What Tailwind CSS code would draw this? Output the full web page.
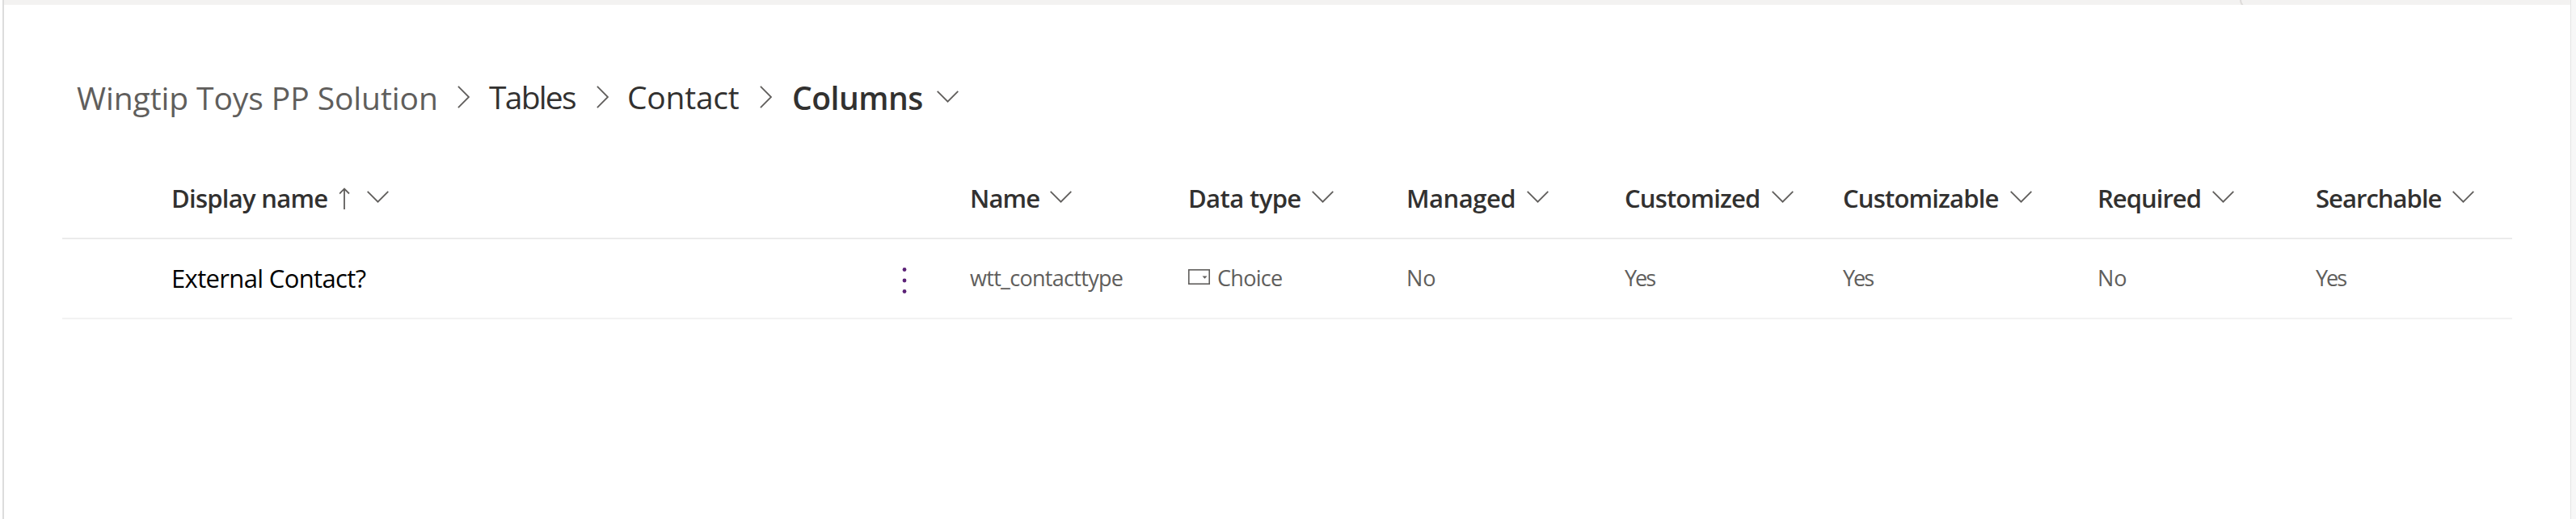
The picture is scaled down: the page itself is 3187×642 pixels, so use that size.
<!DOCTYPE html>
<html lang="en">
<head>
<meta charset="utf-8">
<title>Contact columns</title>
<script src="https://cdn.jsdelivr.net/npm/@tailwindcss/browser@4"></script>
</head>
<body class="bg-white font-['Open_Sans','Noto_Sans',sans-serif]">
<svg class="hidden">
  <symbol id="down" viewBox="0 0 27 15"><path d="M.7 .9 13.5 13.7 26.3 .9" fill="none" stroke="#605e5c" stroke-width="1.8"/></symbol>
  <symbol id="right" viewBox="0 0 15 28"><path d="M.9 .9 14 14 .9 27.1" fill="none" stroke="#605e5c" stroke-width="1.8"/></symbol>
</svg>
<div class="flex h-[642px] w-[3187px] overflow-hidden pl-[3px]">
  <div class="w-[2px] shrink-0 bg-[#dddddd]"></div>
  <main class="w-[3175px] shrink-0">
    <div class="flex h-[6px] bg-[#f3f2f1] pl-[2766px]">
      <svg class="h-[6px] w-[6px]" viewBox="0 0 6 6"><path d="M1 0Q1 4 4 7" fill="none" stroke="#dddbd9" stroke-width="2"/></svg>
    </div>
    <nav class="flex h-[188px] whitespace-nowrap pt-[88px] pl-[90px] text-[39px] leading-[54px] text-[#323130]">
      <span class="w-[471px] tracking-[-0.08px] text-[#605e5c]">Wingtip Toys PP Solution</span>
      <svg class="mt-[12px] h-[28px] w-[15px]"><use href="#right"/></svg>
      <span class="-mt-px w-[157px] pl-[24px] tracking-[-1.76px]">Tables</span>
      <svg class="mt-[12px] h-[28px] w-[15px]"><use href="#right"/></svg>
      <span class="-mt-px w-[187px] pl-[23px] tracking-[-0.23px]">Contact</span>
      <svg class="mt-[12px] h-[28px] w-[15px]"><use href="#right"/></svg>
      <span class="w-[204px] pl-[25px] font-semibold tracking-[-0.5px]">Columns</span>
      <svg class="mt-[18px] h-[15px] w-[27px]"><use href="#down"/></svg>
    </nav>
    <section class="ml-[72px] w-[3031px] whitespace-nowrap">
      <div class="grid h-[102px] grid-cols-[1123px_270px_270px_270px_270px_315px_270px_243px] border-b-2 border-[#ebebeb] pt-[29px] text-[31px] leading-[44px] font-semibold text-[#323130]">
        <div class="flex pl-[135px]">
          <span class="w-[208px] tracking-[-0.72px]">Display name</span>
          <svg class="mt-[9px] h-[28px] w-[34px]" viewBox="0 0 34 28"><path d="M6 27V1.5M0 7.5 6 1.5l6 6" fill="none" stroke="#605e5c" stroke-width="1.8"/></svg>
          <svg class="mt-[13px] h-[15px] w-[27px]"><use href="#down"/></svg>
        </div>
        <div class="flex"><span class="w-[99px] tracking-[-0.9px]">Name</span><svg class="mt-[13px] h-[15px] w-[27px]"><use href="#down"/></svg></div>
        <div class="flex"><span class="w-[153px] tracking-[-0.6px]">Data type</span><svg class="mt-[13px] h-[15px] w-[27px]"><use href="#down"/></svg></div>
        <div class="flex"><span class="w-[149px] tracking-[-0.5px]">Managed</span><svg class="mt-[13px] h-[15px] w-[27px]"><use href="#down"/></svg></div>
        <div class="flex"><span class="w-[182px] tracking-[-0.83px]">Customized</span><svg class="mt-[13px] h-[15px] w-[27px]"><use href="#down"/></svg></div>
        <div class="flex"><span class="w-[207px] tracking-[-0.82px]">Customizable</span><svg class="mt-[13px] h-[15px] w-[27px]"><use href="#down"/></svg></div>
        <div class="flex"><span class="w-[142px] tracking-[-0.97px]">Required</span><svg class="mt-[13px] h-[15px] w-[27px]"><use href="#down"/></svg></div>
        <div class="flex"><span class="w-[169px] tracking-[-0.97px]">Searchable</span><svg class="mt-[13px] h-[15px] w-[27px]"><use href="#down"/></svg></div>
      </div>
      <div class="grid h-[99px] grid-cols-[1123px_270px_270px_270px_270px_315px_270px_243px] border-b-2 border-[#f2f2f2] pt-[26px] text-[27px] leading-[43px] text-[#605e5c]">
        <div class="flex pl-[135px]">
          <span class="w-[904px] text-[31px] leading-[44px] tracking-[-0.65px] text-black">External Contact?</span>
          <svg class="mt-[9px] h-[32px] w-[6px]" viewBox="0 0 6 32" fill="#5c2277"><circle cx="3" cy="2.5" r="2.4"/><circle cx="3" cy="16" r="2.4"/><circle cx="3" cy="29.5" r="2.4"/></svg>
        </div>
        <span class="tracking-[-0.7px]">wtt_contacttype</span>
        <div class="flex">
          <svg class="mt-[11px] h-[19px] w-[27px]" viewBox="0 0 27 19"><rect x=".8" y=".8" width="25.4" height="17.4" fill="none" stroke="#605e5c" stroke-width="1.6"/><path d="M17.5 8.5h6l-3 3.2z" fill="#605e5c"/></svg>
          <span class="pl-[9px] tracking-[-0.71px]">Choice</span>
        </div>
        <span>No</span>
        <span class="tracking-[-2px]">Yes</span>
        <span class="tracking-[-2px]">Yes</span>
        <span>No</span>
        <span class="tracking-[-2px]">Yes</span>
      </div>
    </section>
  </main>
  <div class="w-[7px] shrink-0 border-l border-[#e4e4e4] bg-[#f7f7f7]"></div>
</div>
</body>
</html>
